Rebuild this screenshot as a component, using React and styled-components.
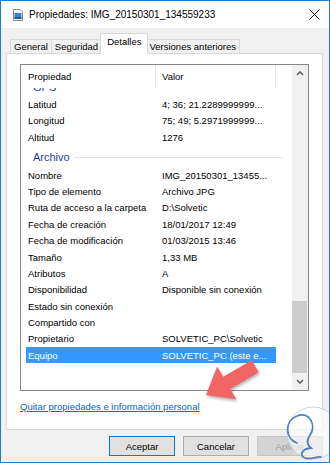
import React from 'react'
import styled, { createGlobalStyle } from 'styled-components'

const Global = createGlobalStyle`
  html, body { margin: 0; padding: 0; background: #fff; }
  * { box-sizing: border-box; }
`

const Window = styled.div`
  position: relative;
  width: 330px;
  height: 463px;
  border: 1px solid #1a7fd6;
  display: flex;
  flex-direction: column;
  overflow: hidden;
  font-family: "Liberation Sans", Arial, sans-serif;
  font-size: 9.5px;
  color: #000;
`

const TitleBar = styled.div`
  height: 27px;
  background: #fff;
  display: flex;
  align-items: center;
  padding: 0 9px 0 12px;
`

const Title = styled.div`
  font-size: 10px;
  margin-left: 6px;
  flex: 1;
`

const Body = styled.div`
  flex: 1;
  background: #f0f0f0;
  display: flex;
  flex-direction: column;
`

const TabStrip = styled.div`
  height: 25px;
  display: flex;
  align-items: flex-end;
  padding-left: 10px;
  position: relative;
  z-index: 1;
`

const Tab = styled.div`
  height: ${p => (p.$active ? '21px' : '14px')};
  padding: ${p => (p.$active ? '2px 6px 0' : '1px 3px 0')};
  margin: ${p => (p.$active ? '0 -2px -1px' : '0 0 0 -1px')};
  background: ${p => (p.$active ? '#fff' : '#f0f0f0')};
  border: 1px solid #d9d9d9;
  border-bottom: none;
  position: relative;
  z-index: ${p => (p.$active ? 2 : 0)};
  white-space: nowrap;
  line-height: 12px;
`

const Panel = styled.div`
  height: 377px;
  margin: 0 6px 0 5px;
  background: #fff;
  border: 1px solid #d9d9d9;
  padding: 10px 0 0 13px;
`

const ListView = styled.div`
  width: 289px;
  height: 327px;
  border: 1px solid #828790;
  display: flex;
`

const ListMain = styled.div`
  flex: 1;
  display: flex;
  flex-direction: column;
  overflow: hidden;
`

const Header = styled.div`
  height: 23px;
  display: flex;
  align-items: stretch;
  flex: none;
`

const HeaderCell = styled.div`
  width: ${p => p.$w}px;
  padding-left: ${p => p.$pad}px;
  display: flex;
  align-items: center;
  border-right: 1px solid #e5e5e5;
`

const Viewport = styled.div`
  flex: 1;
  overflow: hidden;
  padding-left: 5px;
`

const Content = styled.div`
  margin-top: -13.2px;
`

const Group = styled.div`
  height: 21.6px;
  display: flex;
  align-items: center;
  padding: 2px 9px 0 7px;
  color: #1e3d9c;
  font-size: 11px;

  &::after {
    content: '';
    flex: 1;
    height: 1px;
    margin-left: 4px;
    background: #dfe5ee;
  }
`

const Row = styled.div`
  width: 250px;
  height: 16.36px;
  display: flex;
  align-items: center;
  white-space: nowrap;
  background: ${p => (p.$selected ? '#3399ff' : 'transparent')};
  color: ${p => (p.$selected ? '#fff' : '#000')};
`

const Cell = styled.div`
  width: ${p => p.$w}px;
  padding-left: ${p => p.$pad}px;
  overflow: hidden;
`

const ScrollBar = styled.div`
  width: 16px;
  background: #f0f0f0;
  display: flex;
  flex-direction: column;
`

const ScrollButton = styled.div`
  height: 17px;
  display: flex;
  align-items: center;
  justify-content: center;
`

const Track = styled.div`
  flex: 1;
  display: flex;
  flex-direction: column;
  justify-content: flex-end;
`

const Thumb = styled.div`
  height: 72px;
  margin: 0 1px 0 0;
  background: #cdcdcd;
`

const Link = styled.a`
  display: block;
  margin-top: 10px;
  margin-left: 0;
  color: #0066cc;
  text-decoration: underline;
  line-height: 12px;
  width: max-content;
`

const Buttons = styled.div`
  display: flex;
  justify-content: flex-end;
  gap: 8px;
  padding: 6px 6px 0 0;
`

const Button = styled.div`
  width: 66px;
  height: 20px;
  display: flex;
  align-items: center;
  justify-content: center;
  background: ${p => (p.$disabled ? '#d4d4d4' : '#e1e1e1')};
  border: 1px solid ${p => (p.$default ? '#0078d7' : p.$disabled ? '#c4c4c4' : '#adadad')};
  color: ${p => (p.$disabled ? '#a0a0a0' : '#000')};
`

const Arrow = styled.svg`
  position: absolute;
  left: 195px;
  top: 350px;
  filter: drop-shadow(1px 2px 1.5px rgba(0, 0, 0, 0.3));
`

const Watermark = styled.svg`
  position: absolute;
  left: 282px;
  top: 402px;
`

const FileIcon = () => (
  <svg width="10" height="12" viewBox="0 0 10 12">
    <path d="M0.5 0.5 H7 L9.5 3 V11.5 H0.5 Z" fill="#fff" stroke="#8a8a8a" />
    <rect x="1.5" y="4" width="7" height="6" fill="#2b84d8" />
    <rect x="1.5" y="8" width="7" height="2" fill="#1a5aa6" />
  </svg>
)

const Close = () => (
  <svg width="11" height="11" viewBox="0 0 11 11">
    <path d="M0.5 0.5 L10.5 10.5 M10.5 0.5 L0.5 10.5" stroke="#111" strokeWidth="1" />
  </svg>
)

const Chevron = ({ down }) => (
  <svg width="8" height="5" viewBox="0 0 8 5">
    <path
      d={down ? 'M1 1 L4 4 L7 1' : 'M1 4 L4 1 L7 4'}
      fill="none"
      stroke="#606060"
      strokeWidth="1.6"
    />
  </svg>
)

const gps = [
  ['Latitud', '4; 36; 21.2289999999...'],
  ['Longitud', '75; 49; 5.2971999999...'],
  ['Altitud', '1276'],
]

const archivo = [
  ['Nombre', 'IMG_20150301_13455...'],
  ['Tipo de elemento', 'Archivo JPG'],
  ['Ruta de acceso a la carpeta', 'D:\\Solvetic'],
  ['Fecha de creación', '18/01/2017 12:49'],
  ['Fecha de modificación', '01/03/2015 13:46'],
  ['Tamaño', '1,33 MB'],
  ['Atributos', 'A'],
  ['Disponibilidad', 'Disponible sin conexión'],
  ['Estado sin conexión', ''],
  ['Compartido con', ''],
  ['Propietario', 'SOLVETIC_PC\\Solvetic'],
  ['Equipo', 'SOLVETIC_PC (este e...'],
]

function PropRow({ name, value, selected }) {
  return (
    <Row $selected={selected}>
      <Cell $w={130} $pad={2}>{name}</Cell>
      <Cell $w={120} $pad={6}>{value}</Cell>
    </Row>
  )
}

export default function App() {
  return (
    <>
      <Global />
      <Window>
        <TitleBar>
          <FileIcon />
          <Title>Propiedades: IMG_20150301_134559233</Title>
          <Close />
        </TitleBar>
        <Body>
          <TabStrip>
            <Tab>General</Tab>
            <Tab>Seguridad</Tab>
            <Tab $active>Detalles</Tab>
            <Tab>Versiones anteriores</Tab>
          </TabStrip>
          <Panel>
            <ListView>
              <ListMain>
                <Header>
                  <HeaderCell $w={135} $pad={7}>Propiedad</HeaderCell>
                  <HeaderCell $w={120} $pad={6}>Valor</HeaderCell>
                </Header>
                <Viewport>
                  <Content>
                    <Group>GPS</Group>
                    {gps.map(([n, v]) => (
                      <PropRow key={n} name={n} value={v} />
                    ))}
                    <Group>Archivo</Group>
                    {archivo.map(([n, v]) => (
                      <PropRow key={n} name={n} value={v} selected={n === 'Equipo'} />
                    ))}
                  </Content>
                </Viewport>
              </ListMain>
              <ScrollBar>
                <ScrollButton><Chevron /></ScrollButton>
                <Track><Thumb /></Track>
                <ScrollButton><Chevron down /></ScrollButton>
              </ScrollBar>
            </ListView>
            <Link>Quitar propiedades e información personal</Link>
          </Panel>
          <Buttons>
            <Button $default>Aceptar</Button>
            <Button>Cancelar</Button>
            <Button $disabled>Aplicar</Button>
          </Buttons>
        </Body>

        <Arrow width="70" height="58" viewBox="0 0 70 58">
          <polygon
            points="10,44 21.1,15.5 27.2,25.8 55.7,9.3 62.7,21.3 34.2,37.9 40.3,48.3"
            fill="#f36464"
          />
        </Arrow>

        <Watermark width="60" height="62" viewBox="0 0 60 62">
          <circle cx="30" cy="30" r="26" fill="rgba(255,255,255,0.6)" stroke="rgba(190,200,210,0.8)" strokeWidth="1" />
          <path
            d="M14 40 C2 36, 1 18, 14 13 C26 8, 34 22, 27 32 C23 38, 24 42, 28 45 C18 46, 16 53, 22 55 C28 57, 34 53, 38 54"
            fill="none"
            stroke="#4d7fc4"
            strokeWidth="1.8"
            strokeLinecap="round"
          />
        </Watermark>
      </Window>
    </>
  )
}
